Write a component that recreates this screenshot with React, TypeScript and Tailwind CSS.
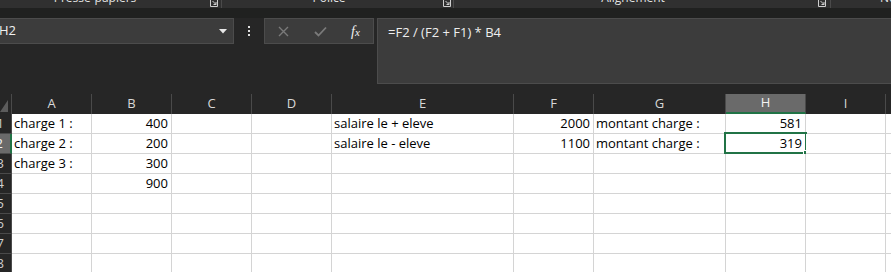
import React from "react";

type Cell = { text: string; right?: boolean };
type Row = Record<string, Cell>;

const COLS = [
  { id: "A", w: "w-[80px]" },
  { id: "B", w: "w-[80px]" },
  { id: "C", w: "w-[80px]" },
  { id: "D", w: "w-[80px]" },
  { id: "E", w: "w-[182px]" },
  { id: "F", w: "w-[80px]" },
  { id: "G", w: "w-[132px]" },
  { id: "H", w: "w-[80px]" },
  { id: "I", w: "w-[80px]" },
];

const ROWS: Row[] = [
  {
    A: { text: "charge 1 :" },
    B: { text: "400", right: true },
    E: { text: "salaire le + eleve" },
    F: { text: "2000", right: true },
    G: { text: "montant charge :" },
    H: { text: "581", right: true },
  },
  {
    A: { text: "charge 2 :" },
    B: { text: "200", right: true },
    E: { text: "salaire le - eleve" },
    F: { text: "1100", right: true },
    G: { text: "montant charge :" },
    H: { text: "319", right: true },
  },
  { A: { text: "charge 3 :" }, B: { text: "300", right: true } },
  { B: { text: "900", right: true } },
  {},
  {},
  {},
  {},
];

function Launcher() {
  return (
    <svg width="8" height="7" viewBox="0 0 8 7" className="shrink-0">
      <path d="M0.5 0 V6.5 H7.5 V0" fill="none" stroke="#cfcfcf" strokeWidth="1" />
      <path d="M2.5 1 L6 4.5 M6 2 V4.5 H3.5" fill="none" stroke="#cfcfcf" strokeWidth="1" />
    </svg>
  );
}

function RibbonLabels() {
  return (
    <div className="flex h-[8px] overflow-hidden bg-[#303030] text-[12px] text-[#e2e2e2]">
      <div className="flex w-[222px] shrink-0 items-start border-r border-[#4a4a4a]">
        <div className="w-[190px] text-center leading-[16px] -mt-[10px]">Presse-papiers</div>
        <div className="ml-[20px]">
          <Launcher />
        </div>
      </div>
      <div className="flex w-[232px] shrink-0 items-start border-r border-[#4a4a4a]">
        <div className="w-[214px] text-center leading-[16px] -mt-[10px]">Police</div>
        <div className="ml-[7px]">
          <Launcher />
        </div>
      </div>
      <div className="flex w-[377px] shrink-0 items-start border-r border-[#4a4a4a]">
        <div className="w-[358px] text-center leading-[16px] -mt-[10px]">Alignement</div>
        <div className="ml-[6px]">
          <Launcher />
        </div>
      </div>
      <div className="pl-[49px] leading-[16px] -mt-[10px]">Nombre</div>
    </div>
  );
}

function FormulaBar() {
  return (
    <div className="flex h-[76px] items-start bg-[#262626]">
      <div className="flex h-[26px] w-[234px] shrink-0 items-center justify-between border border-l-0 border-[#4c4c4c] bg-[#3c3c3c] text-[13px] text-[#f0f0f0]">
        <span className="-ml-[1px]">H2</span>
        <svg width="8" height="5" viewBox="0 0 8 5" className="mr-[6px]">
          <path d="M0 0 H8 L4 4.5 Z" fill="#e8e8e8" />
        </svg>
      </div>
      <div className="flex h-[26px] w-[30px] shrink-0 flex-col items-center justify-center gap-[2px]">
        <span className="h-[2px] w-[2px] bg-[#e0e0e0]" />
        <span className="h-[2px] w-[2px] bg-[#e0e0e0]" />
        <span className="h-[2px] w-[2px] bg-[#e0e0e0]" />
      </div>
      <div className="flex h-[26px] w-[110px] shrink-0 items-center border border-[#4c4c4c] bg-[#3c3c3c]">
        <svg width="11" height="11" viewBox="0 0 11 11" className="ml-[13px]">
          <path d="M1 1 L10 10 M10 1 L1 10" stroke="#7a7a7a" strokeWidth="1.4" />
        </svg>
        <svg width="13" height="11" viewBox="0 0 13 11" className="ml-[25px]">
          <path d="M1 6 L4.5 9.5 L12 1.5" fill="none" stroke="#7a7a7a" strokeWidth="1.8" />
        </svg>
        <span className="ml-[24px] font-['Liberation_Serif',serif] text-[14px] italic text-[#f2f2f2]">
          f<span className="text-[11px]">x</span>
        </span>
      </div>
      <div className="ml-[3px] h-[66px] flex-1 border border-r-0 border-[#4c4c4c] bg-[#3c3c3c] pl-[10px] pt-[4px] text-[13px] text-[#eeeeee]">
        =F2 / (F2 + F1) * B4
      </div>
    </div>
  );
}

function HeaderRow() {
  return (
    <div className="flex h-[20px] bg-[#262626] text-[13px] text-[#d8d8d8]">
      <div className="flex w-[12px] shrink-0 items-end border-r border-[#4a4a4a] pb-[2px]">
        <svg width="9" height="12" viewBox="0 0 9 12">
          <path d="M0 12 L8 0 V12 Z" fill="#5c5c5c" />
        </svg>
      </div>
      {COLS.map((c) =>
        c.id === "H" ? (
          <div
            key={c.id}
            className={`${c.w} flex shrink-0 items-center justify-center border-r border-b-2 border-r-[#4a4a4a] border-b-[#217346] bg-[#6a6a6a] text-[#f4f4f4]`}
          >
            {c.id}
          </div>
        ) : (
          <div
            key={c.id}
            className={`${c.w} flex shrink-0 items-center justify-center border-r border-[#4a4a4a]`}
          >
            {c.id}
          </div>
        )
      )}
      <div className="flex-1" />
    </div>
  );
}

function GridRow({ row, n }: { row: Row; n: number }) {
  const active = n === 2;
  return (
    <div className="flex h-[20px]">
      <div
        className={`flex w-[12px] shrink-0 items-center justify-end overflow-hidden border-b border-[#4a4a4a] pr-[7px] text-[13px] ${
          active ? "border-r-2 border-r-[#217346] bg-[#6a6a6a] text-[#f4f4f4]" : "border-r border-r-[#4a4a4a] bg-[#262626] text-[#cfcfcf]"
        }`}
      >
        <span className="shrink-0">{n}</span>
      </div>
      {COLS.map((c) => {
        const cell = row[c.id];
        const selected = active && c.id === "H";
        return (
          <div
            key={c.id}
            className={`${c.w} relative flex shrink-0 items-center border-r border-b border-[#d4d4d4] bg-white text-[13px] text-black ${
              cell?.right ? "justify-end pr-[3px]" : "justify-start pl-[2px]"
            }`}
          >
            {cell && <span className="whitespace-nowrap">{cell.text}</span>}
            {selected && (
              <>
                <div className="absolute -left-[2px] -top-[2px] h-[22px] w-[83px] border-2 border-[#217346]" />
                <div className="absolute -bottom-[3px] -right-[4px] h-[6px] w-[6px] border border-white bg-[#217346]" />
              </>
            )}
          </div>
        );
      })}
      <div className="flex-1 border-b border-[#d4d4d4] bg-white" />
    </div>
  );
}

export default function App() {
  return (
    <div className="h-[272px] w-[891px] overflow-hidden bg-[#262626] font-['Open_Sans','Noto_Sans',sans-serif]">
      <RibbonLabels />
      <div className="h-[10px] bg-[#202120]" />
      <FormulaBar />
      <HeaderRow />
      {ROWS.map((r, i) => (
        <GridRow key={i} row={r} n={i + 1} />
      ))}
    </div>
  );
}
